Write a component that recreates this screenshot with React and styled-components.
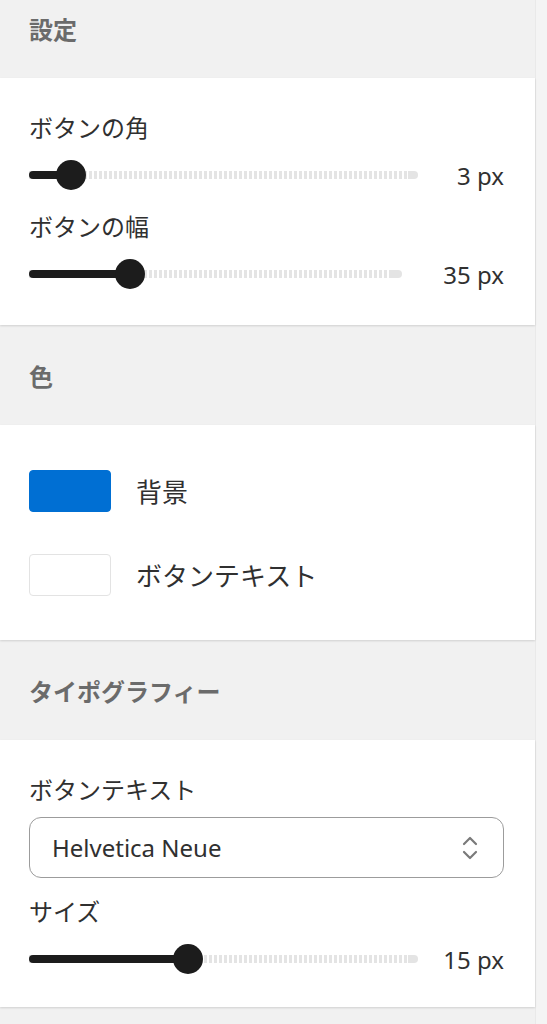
import styled, { createGlobalStyle } from 'styled-components';

const GlobalStyle = createGlobalStyle`
  html, body {
    margin: 0;
    padding: 0;
    background: #f1f1f1;
  }
  body {
    font-family: "Noto Sans", "Noto Sans CJK JP", sans-serif;
    color: #303030;
  }
`;

const sliders = {
  radius: { label: 'ボタンの角', value: 3, min: 0, max: 40, valueWidth: 86 },
  width: { label: 'ボタンの幅', value: 35, min: 10, max: 110, valueWidth: 102 },
  size: { label: 'サイズ', value: 15, min: 11, max: 21, valueWidth: 86 },
};

const Slider = ({ value, min, max, valueWidth }) => {
  const pct = (value - min) / (max - min);
  const thumbLeft = `calc(${pct} * (100% - 30px))`;
  return (
    <SliderRow>
      <Track>
        <Rail />
        <Fill style={{ width: `calc(${pct} * (100% - 30px) + 15px)` }} />
        <Thumb style={{ left: thumbLeft }} />
      </Track>
      <Value $width={valueWidth}>{value} px</Value>
    </SliderRow>
  );
};

const SliderField = ({ config }) => (
  <Field>
    <Label>{config.label}</Label>
    <Slider {...config} />
  </Field>
);

const UpDownIcon = () => (
  <svg width="18" height="28" viewBox="0 0 18 28" fill="none">
    <path
      d="M3 10l6-6 6 6M3 18l6 6 6-6"
      stroke="#7a7a7a"
      strokeWidth="2.2"
      strokeLinecap="round"
      strokeLinejoin="round"
    />
  </svg>
);

const App = () => (
  <>
    <GlobalStyle />
    <Page>
      <Column>
        <SectionHeader $first>設定</SectionHeader>
        <Panel $pad="35px 0 33px">
          <SliderField config={sliders.radius} />
          <SliderField config={sliders.width} />
        </Panel>

        <SectionHeader>色</SectionHeader>
        <Panel $pad="45px 0 44px">
          <SwatchList>
            <SwatchRow>
              <Swatch $color="#006fd3" />
              <SwatchLabel>背景</SwatchLabel>
            </SwatchRow>
            <SwatchRow>
              <Swatch $color="#ffffff" $bordered />
              <SwatchLabel>ボタンテキスト</SwatchLabel>
            </SwatchRow>
          </SwatchList>
        </Panel>

        <SectionHeader>タイポグラフィー</SectionHeader>
        <Panel $pad="35px 0 30px">
          <Field>
            <Label>ボタンテキスト</Label>
            <Select>
              <span>Helvetica Neue</span>
              <UpDownIcon />
            </Select>
          </Field>
          <SliderField config={sliders.size} />
        </Panel>
      </Column>
      <ScrollTrack />
    </Page>
  </>
);

const Page = styled.div`
  display: flex;
  height: 1024px;
  overflow: hidden;
`;

const Column = styled.div`
  width: 535px;
  display: flex;
  flex-direction: column;
`;

const ScrollTrack = styled.div`
  flex: 1;
  background: #f4f4f4;
  border-left: 1px solid #e9e9e9;
`;

const SectionHeader = styled.h2`
  margin: ${(p) => (p.$first ? '-22px' : '0')} 0 0;
  height: 100px;
  padding: 0 29px;
  display: flex;
  align-items: center;
  font-size: 24px;
  font-weight: 700;
  color: #6b6b6b;
`;

const Panel = styled.section`
  background: #fff;
  padding: ${(p) => p.$pad};
  box-shadow: 0 1px 2px rgba(0, 0, 0, 0.14);
  display: flex;
  flex-direction: column;
  gap: 19px;
  position: relative;
`;

const Field = styled.div`
  padding: 0 31px 0 29px;
  display: flex;
  flex-direction: column;
  gap: 14px;
`;

const Label = styled.div`
  font-size: 24px;
  line-height: 30px;
  color: #303030;
`;

const SliderRow = styled.div`
  display: flex;
  align-items: center;
  height: 36px;
`;

const Track = styled.div`
  position: relative;
  flex: 1;
  height: 30px;
`;

const Rail = styled.div`
  position: absolute;
  left: 0;
  right: 0;
  top: 11px;
  height: 8px;
  border-radius: 0 4px 4px 0;
  background:
    linear-gradient(#e4e4e4, #e4e4e4) right / 10px 100% no-repeat,
    repeating-linear-gradient(90deg, #e4e4e4 0 3px, transparent 3px 5px);
`;

const Fill = styled.div`
  position: absolute;
  left: 0;
  top: 11px;
  height: 8px;
  border-radius: 4px;
  background: #1c1c1c;
`;

const Thumb = styled.div`
  position: absolute;
  top: 0;
  width: 30px;
  height: 30px;
  border-radius: 50%;
  background: #1c1c1c;
`;

const Value = styled.div`
  width: ${(p) => p.$width}px;
  text-align: right;
  font-size: 24px;
  color: #303030;
`;

const SwatchList = styled.div`
  padding: 0 29px;
  display: flex;
  flex-direction: column;
  gap: 42px;
`;

const SwatchRow = styled.div`
  display: flex;
  align-items: center;
  gap: 25px;
`;

const Swatch = styled.div`
  width: 82px;
  height: 42px;
  box-sizing: border-box;
  border-radius: 4px;
  background: ${(p) => p.$color};
  border: 1px solid ${(p) => (p.$bordered ? '#e3e3e3' : p.$color)};
`;

const SwatchLabel = styled.div`
  font-size: 26px;
  color: #303030;
`;

const Select = styled.div`
  height: 61px;
  box-sizing: border-box;
  border: 1px solid #9c9c9c;
  border-radius: 12px;
  padding: 0 24px 0 22px;
  display: flex;
  align-items: center;
  justify-content: space-between;
  font-size: 24px;
  color: #303030;
  margin-top: -2px;
`;

export default App;
